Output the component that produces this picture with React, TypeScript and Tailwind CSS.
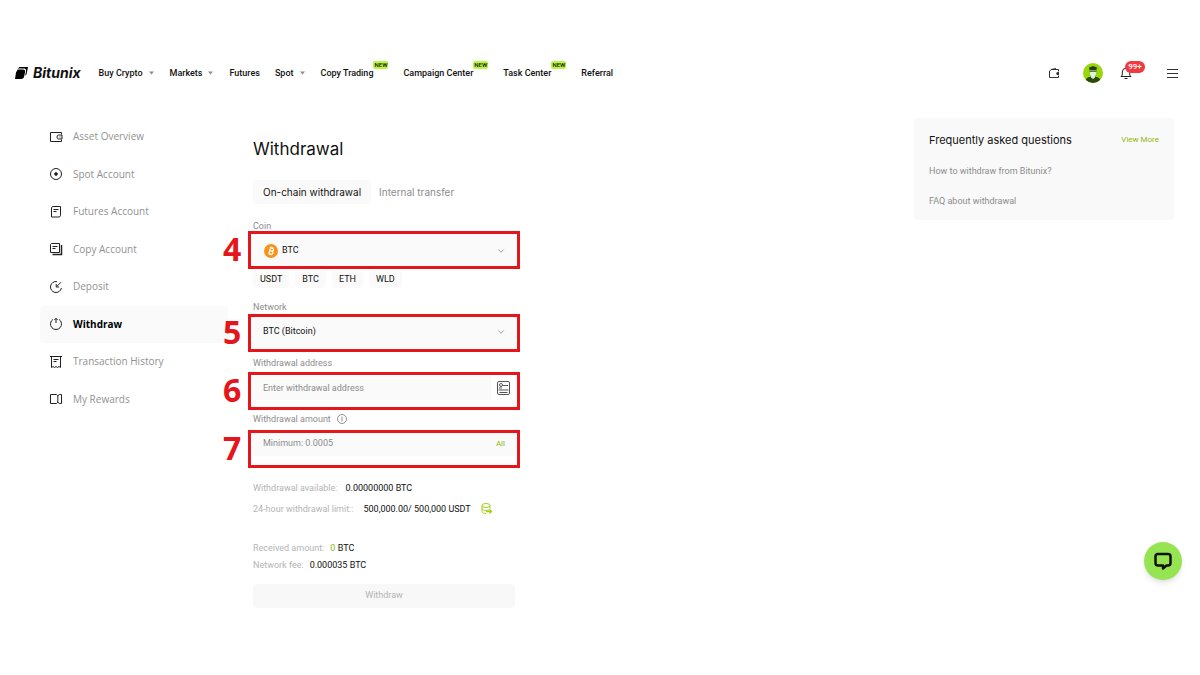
import type { ReactNode } from 'react'
import { ChevronDown } from 'lucide-react'

interface NavItem {
  label: string
  menu?: boolean
  isNew?: boolean
}

const NAV_ITEMS: NavItem[] = [
  { label: 'Buy Crypto', menu: true },
  { label: 'Markets', menu: true },
  { label: 'Futures' },
  { label: 'Spot', menu: true },
  { label: 'Copy Trading', isNew: true },
  { label: 'Campaign Center', isNew: true },
  { label: 'Task Center', isNew: true },
  { label: 'Referral' },
]

const SIDEBAR_ITEMS: { label: string; icon: ReactNode }[] = [
  {
    label: 'Asset Overview',
    icon: (
      <>
        <path d="M12.5 4.5v-2h-11v9h11v-2" />
        <path d="M13 5H9.5a1.5 2 0 0 0 0 4H13z" />
        <path d="M10.5 7h1" />
      </>
    ),
  },
  {
    label: 'Spot Account',
    icon: (
      <>
        <circle cx="7" cy="7" r="5.5" />
        <path d="M7 4.8 9.2 7 7 9.2 4.8 7z" fill="currentColor" stroke="none" />
      </>
    ),
  },
  {
    label: 'Futures Account',
    icon: (
      <>
        <path d="M3.5 1.5h8v9l-1 1.5h-8V3z" />
        <path d="M4.5 4.5h5M4.5 6.5h3" />
      </>
    ),
  },
  {
    label: 'Copy Account',
    icon: (
      <>
        <path d="M2.5 1.5h8v9h-9v-8z" />
        <path d="M3.5 4.5h5M3.5 6.5h3" />
        <path d="M12.5 3v9.5h-9" strokeWidth="1.5" />
      </>
    ),
  },
  {
    label: 'Deposit',
    icon: (
      <>
        <path d="M8 1.6A5.5 5.5 0 1 0 12.4 8" />
        <path d="M12 2.2 7.5 6.7M7.2 4v3h3" />
      </>
    ),
  },
  {
    label: 'Withdraw',
    icon: (
      <>
        <path d="M4 2.4a5.5 5.5 0 1 0 6 0" />
        <path d="M7 6V1.5M5.3 3 7 1.3 8.7 3" />
      </>
    ),
  },
  {
    label: 'Transaction History',
    icon: (
      <>
        <path d="M1 1.5h12M2.5 1.5v11l1.5-1 1.5 1 1.5-1 1.5 1 1.5-1 1.5 1v-11" />
        <path d="M4.5 4.5h5M4.5 6.5h3" />
      </>
    ),
  },
  {
    label: 'My Rewards',
    icon: (
      <>
        <path d="M7.5 2.5h-6v9h6l1.3-1.3V3.8z" />
        <path d="m8.8 3.8 1.7-1.3h2v9h-2l-1.7-1.3" />
      </>
    ),
  },
]

const QUICK_COINS = ['USDT', 'BTC', 'ETH', 'WLD']

const STEPS = [
  { n: 4, spacing: 'mb-[45px]' },
  { n: 5, spacing: 'mb-5' },
  { n: 6, spacing: 'mb-5' },
  { n: 7, spacing: '' },
]

function Logo() {
  return (
    <a href="#" className="flex items-center gap-[5px]">
      <svg width="13" height="12" viewBox="0 0 13 12">
        <path d="M4.5 0H13l-1.5 7.5-1.3 1.3.9-4.8C11.3 2.5 10.6 1.6 9.2 1.6H2.8z" />
        <path d="M2.7 2.4h5.5c1.5 0 2.2.9 1.9 2.4L9.3 9C9 10.7 7.8 12 6 12H0l1-6.5z" />
      </svg>
      <span className="text-[14px] leading-4 font-bold italic">Bitunix</span>
    </a>
  )
}

function Header() {
  return (
    <header className="flex h-[46px] items-center pr-[22px] pl-[15px]">
      <Logo />
      <nav className="ml-[18px] flex items-center gap-[15px] font-['Roboto',sans-serif] text-[9px] leading-[14px] font-medium">
        {NAV_ITEMS.map(item => (
          <a key={item.label} href="#" className="flex items-center whitespace-nowrap">
            {item.label}
            {item.menu && (
              <svg width="5" height="4" viewBox="0 0 5 4" className="mr-px ml-[6px] text-[#8c8c8c]">
                <path d="M0 .5h5l-2.5 3z" fill="currentColor" />
              </svg>
            )}
            {item.isNew && (
              <span className="-mt-[17px] w-[15px] rounded-[2px] bg-[#b9f641] text-center text-[6px] leading-[8px]">
                NEW
              </span>
            )}
          </a>
        ))}
      </nav>

      <div className="ml-auto flex items-center">
        <button aria-label="Wallet">
          <svg width="12" height="12" viewBox="0 0 12 12" fill="none" stroke="#333">
            <path d="M10.5 4.5v-2h-7l-2 1.5v6.5h9v-2M3 2.5l5-1" />
            <path d="M11 5H9.5a1.2 1.5 0 0 0 0 3H11z" fill="#333" stroke="none" />
          </svg>
        </button>
        <button aria-label="Profile" className="ml-[23px]">
          <svg width="20" height="20" viewBox="0 0 20 20">
            <defs>
              <clipPath id="avatar">
                <circle cx="10" cy="10" r="10" />
              </clipPath>
            </defs>
            <g clipPath="url(#avatar)">
              <rect width="20" height="20" fill="#9bd60c" />
              <path d="M2 20c0-4.5 3-6.5 8-6.5s8 2 8 6.5z" fill="#2b4a0c" />
              <path d="M8 11h4v3.5L10 16l-2-1.5z" fill="#d6eedb" />
              <path d="M7 7h6v3.5c0 1.6-1.3 3-3 3s-3-1.4-3-3z" fill="#dff3e4" />
              <path d="M6 4.5 10 3l4 1.5-.6 2.5H6.6z" fill="#24400c" />
              <path d="M6.5 7.5h7v1.2h-7z" fill="#31540f" />
            </g>
          </svg>
        </button>
        <button aria-label="Notifications" className="relative ml-[17px]">
          <svg width="12" height="12" viewBox="0 0 12 12" fill="none" stroke="#222">
            <path d="M1 9.5h10L9.7 8V5A3.7 3.7 0 0 0 2.3 5v3zM4.5 11.5h3" />
          </svg>
          <span className="absolute -top-[6px] left-[5px] w-5 rounded-full bg-[#ef3b3f] text-center font-['Roboto',sans-serif] text-[8px] leading-[12px] font-medium text-white">
            99+
          </span>
        </button>
        <button aria-label="Menu" className="ml-[35px]">
          <svg width="11" height="10" viewBox="0 0 11 10" stroke="#333">
            <path d="M0 1.5h11M0 5.5h11M0 9.5h11" />
          </svg>
        </button>
      </div>
    </header>
  )
}

function Sidebar() {
  return (
    <nav className="grid h-[300px] w-[188px] shrink-0 auto-rows-fr font-['Open_Sans',sans-serif] text-[10px]">
      {SIDEBAR_ITEMS.map(item => {
        const active = item.label === 'Withdraw'
        return (
          <a
            key={item.label}
            href="#"
            className={`flex items-center gap-[10px] rounded-sm pl-[9px] ${
              active ? 'bg-[#fafafa] font-bold text-black' : 'text-[#929292]'
            }`}
          >
            <svg width="14" height="14" viewBox="0 0 14 14" fill="none" stroke="currentColor" className="text-[#222]">
              {item.icon}
            </svg>
            {item.label}
          </a>
        )
      })}
    </nav>
  )
}

function BitcoinIcon() {
  return (
    <svg width="14" height="14" viewBox="0 0 14 14" className="pointer-events-none absolute left-[11px]">
      <circle cx="7" cy="7" r="7" fill="#f7931a" />
      <g transform="rotate(14 7 7)" fill="none" stroke="#fff" strokeWidth="1.2">
        <path d="M5 4h2.600a1.400 1.400 0 0 1 0 2.900H5.600h2.200a1.500 1.500 0 0 1 0 3.100H5M5.700 4v6M6.300 2.800V4M7.800 2.800V4M6.300 10v1.200M7.800 10v1.200" />
      </g>
    </svg>
  )
}

function SelectField({ id, label, option, icon }: { id: string; label: string; option: string; icon?: ReactNode }) {
  return (
    <div>
      <label htmlFor={id} className="mb-0.5 block leading-[14px] text-[#8c8c8c]">{label}</label>
      <div className="relative flex h-8 items-center bg-[#fafafa]">
        {icon}
        <select id={id} className={`h-full w-full appearance-none bg-transparent ${icon ? 'pl-[29px]' : 'pl-[10px]'}`}>
          <option>{option}</option>
        </select>
        <ChevronDown className="pointer-events-none absolute right-[9px] h-[10px] w-[10px] text-[#8c8c8c]" strokeWidth={2} />
      </div>
    </div>
  )
}

// numbered frames drawn over the four fields
function StepMarks() {
  return (
    <ol className="pointer-events-none absolute top-3 -right-[5px] -left-[30px]">
      {STEPS.map(step => (
        <li key={step.n} className={`flex h-[38px] ${step.spacing}`}>
          <span className="w-[25px] font-['Open_Sans',sans-serif] text-[32px] leading-[36px] font-bold text-[#e4151b]">
            {step.n}
          </span>
          <span className="h-full flex-1 border-[3px] border-[#e4151b]" />
        </li>
      ))}
    </ol>
  )
}

function WithdrawForm() {
  return (
    <main className="ml-[25px] w-[262px] shrink-0 pt-[19px] font-['Roboto',sans-serif] text-[9px]">
      <h1 className="font-['Inter',sans-serif] text-[17px] leading-6">Withdrawal</h1>
      <div className="mt-[19px] flex h-6 items-center gap-2 font-['Inter',sans-serif] text-[10px]">
        <button className="h-full rounded-sm bg-[#fafafa] px-[10px]">On-chain withdrawal</button>
        <button className="text-[#8c8c8c]">Internal transfer</button>
      </div>

      <div className="relative mt-[15px]">
        <SelectField id="coin" label="Coin" option="BTC" icon={<BitcoinIcon />} />
        <div className="mt-1 mb-3 flex gap-[6px]">
          {QUICK_COINS.map(coin => (
            <button key={coin} className="h-[17px] rounded-sm bg-[#fafafa] px-[7px]">{coin}</button>
          ))}
        </div>
        <SelectField id="network" label="Network" option="BTC (Bitcoin)" />

        <label htmlFor="address" className="mt-2 mb-0.5 block leading-[14px] text-[#8c8c8c]">Withdrawal address</label>
        <div className="flex h-8 items-center">
          <input
            id="address"
            placeholder="Enter withdrawal address"
            className="h-6 min-w-0 flex-1 bg-[#fafafa] pl-[10px] placeholder:text-[#8c8c8c]"
          />
          <button aria-label="Address book" className="mr-[5px] ml-[6px]">
            <svg width="13" height="14" viewBox="0 0 13 14" fill="none" stroke="#555">
              <rect x=".5" y=".5" width="12" height="13" rx="1.5" />
              <circle cx="4" cy="4" r="1.5" />
              <path d="M5.5 4.5H11M2 7h3M1.5 9h10M2.5 11.5h8" />
            </svg>
          </button>
        </div>

        <div className="mt-2 mb-0.5 flex items-center gap-[6px]">
          <label htmlFor="amount" className="leading-[14px] text-[#8c8c8c]">Withdrawal amount</label>
          <svg width="10" height="10" viewBox="0 0 10 10" fill="none" stroke="#777" strokeWidth=".8">
            <circle cx="5" cy="5" r="4.5" />
            <path d="M5 2.5v5" />
          </svg>
        </div>
        <div className="flex h-8 items-center">
          <div className="flex h-6 w-full items-center bg-[#fafafa] px-[10px]">
            <input id="amount" placeholder="Minimum: 0.0005" className="min-w-0 flex-1 bg-transparent placeholder:text-[#8c8c8c]" />
            <button className="text-[8px] text-[#8fb80e]">All</button>
          </div>
        </div>
        <StepMarks />
      </div>

      <dl className="mt-[21px] leading-[14px]">
        <div className="flex gap-2">
          <dt className="text-[#b4b4b4]">Withdrawal available:</dt>
          <dd>0.00000000 BTC</dd>
        </div>
        <div className="mt-[7px] flex items-center gap-[10px]">
          <dt className="text-[#b4b4b4]">24-hour withdrawal limit::</dt>
          <dd>500,000.00/ 500,000 USDT</dd>
          <dd>
            <svg width="12" height="12" viewBox="0 0 12 12" fill="none" stroke="#a2cf1c">
              <ellipse cx="5" cy="2.5" rx="4" ry="2" />
              <path d="M1 2.5v6c0 1 1.5 2 4 2M9 2.5V5M1 5.5c0 1 1.5 2 4 2s4-1 4-2" />
              <path d="M5 8.5h5.5M8.5 6.5l2 2-2 2" strokeWidth="1.3" />
            </svg>
          </dd>
        </div>
        <div className="mt-[25px] flex gap-[6px]">
          <dt className="text-[#b4b4b4]">Received amount:</dt>
          <dd><span className="text-[#8fb80e]">0</span> BTC</dd>
        </div>
        <div className="mt-[3px] flex gap-[6px]">
          <dt className="text-[#b4b4b4]">Network fee:</dt>
          <dd>0.000035 BTC</dd>
        </div>
      </dl>
      <button className="mt-3 h-6 w-full rounded-sm bg-[#f8f8f8] text-[#b4b4b4]">Withdraw</button>
    </main>
  )
}

function Faq() {
  return (
    <aside className="mr-[26px] ml-auto w-[260px] rounded bg-[#f9f9f9] px-[15px] pt-[14px] pb-3 font-['Roboto',sans-serif] text-[9px] leading-[14px]">
      <div className="flex items-center justify-between">
        <h2 className="font-['Inter',sans-serif] text-[11px] leading-4">Frequently asked questions</h2>
        <a href="#" className="text-[8px] text-[#8fb80e]">View More</a>
      </div>
      <ul className="mt-4 space-y-4 text-[#8c8c8c]">
        <li><a href="#">How to withdraw from Bitunix?</a></li>
        <li><a href="#">FAQ about withdrawal</a></li>
      </ul>
    </aside>
  )
}

export default function App() {
  return (
    <div className="min-h-screen bg-white pt-[50px] font-['Inter',sans-serif] text-[#111]">
      <Header />
      <div className="flex items-start pt-[22px] pl-10">
        <Sidebar />
        <WithdrawForm />
        <Faq />
      </div>
      <button
        aria-label="Open chat"
        className="fixed right-[18px] bottom-[95px] flex h-[38px] w-[38px] items-center justify-center rounded-full bg-[#97e452] shadow-md"
      >
        <svg width="20" height="20" viewBox="0 0 20 20" fill="none" stroke="#111" strokeWidth="2.5" strokeLinejoin="round">
          <path d="M5 3h10q2.500 0 2.500 2.500v6.500q0 2.500-2.500 2.500h-1.500L10 17.500v-3H5q-2.500 0-2.500-2.500V5.500Q2.500 3 5 3z" />
        </svg>
      </button>
    </div>
  )
}
